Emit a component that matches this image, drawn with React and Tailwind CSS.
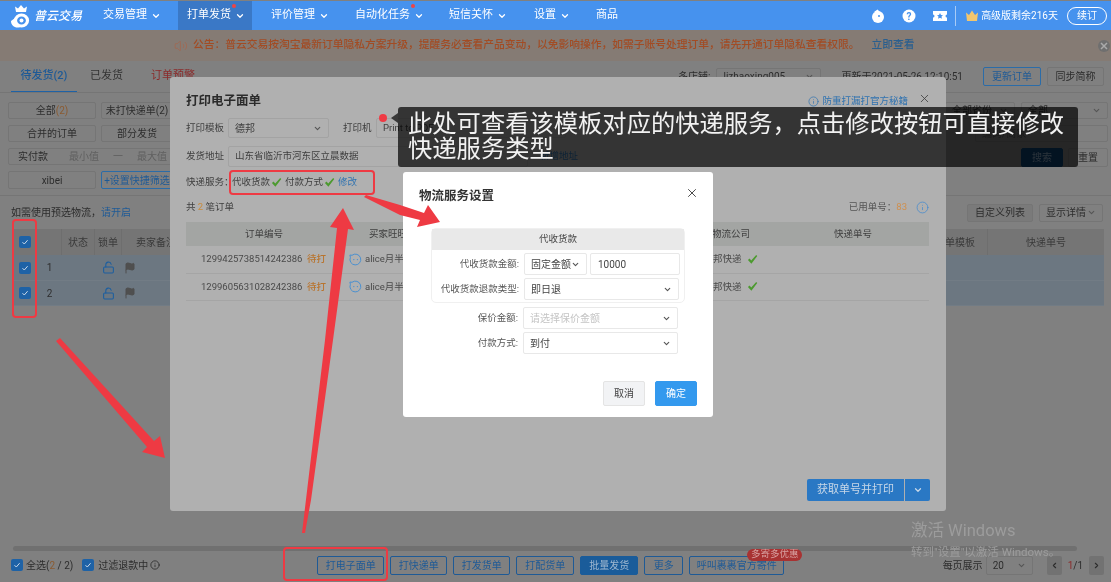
import React from "react";
import { ChevronDown, X, Info, Volume2, ChevronLeft, ChevronRight, Flag, LockOpen } from "lucide-react";

const Dot = () => <span className="absolute -right-[5px] -top-[3px] w-[4px] h-[4px] rounded-full bg-[#ef4444]" />;

function NavItem({ label, box, dot, active, chev = true }) {
  return (
    <div className={`flex items-center h-full ${box} ${active ? "bg-[#3a78c6]" : ""}`}>
      <span className="relative">{label}{dot && <Dot />}</span>
      {chev && <ChevronDown size={10} strokeWidth={3} className="ml-[4px]" />}
    </div>
  );
}

function Btn({ children, className = "" }) {
  return <div className={`flex items-center justify-center rounded-[2px] border text-[10px] ${className}`}>{children}</div>;
}

function Sel({ children, className = "", muted }) {
  return (
    <div className={`flex items-center justify-between rounded-[2px] border px-[6px] text-[10px] ${className}`}>
      <span className={muted ? "text-[#c4c4c4]" : ""}>{children}</span>
      <ChevronDown size={9} strokeWidth={3} className="shrink-0 text-[#555]" />
    </div>
  );
}

function Cb({ className = "" }) {
  return (
    <span className={`flex items-center justify-center w-[12px] h-[12px] rounded-[2px] bg-[#1e62a6] ${className}`}>
      <svg width="8" height="8" viewBox="0 0 8 8" fill="none"><path d="M1.5 4.2 3.3 6 6.6 2.2" stroke="#c9d9ea" strokeWidth="1" /></svg>
    </span>
  );
}

function Tick({ size = 11 }) {
  return (
    <svg width={size} height={size} viewBox="0 0 12 12" className="shrink-0">
      <path d="M1 6.5 2.8 5 4.6 7.2 10 1l1.2 1.1-6.4 8.6z" fill="#4c9a2f" />
    </svg>
  );
}

function Wang() {
  return (
    <svg width="13" height="13" viewBox="0 0 13 13" fill="none" className="shrink-0">
      <path d="M3 2.3A5.4 5.4 0 1 1 1.4 4.4L.9 2z" stroke="#4a90d0" strokeWidth="1" />
      <circle cx="4.8" cy="6.6" r=".7" fill="#4a90d0" /><circle cx="8.4" cy="6.6" r=".7" fill="#4a90d0" />
    </svg>
  );
}

function PageRow({ n, cls }) {
  return (
    <div className={`flex bg-[#6c7781] border-b border-[#727c85] text-[#2e2e2e] ${cls}`}>
      <div className="w-[25px] flex items-center justify-center"><Cb /></div>
      <div className="w-[25px] flex items-center justify-center text-[10px]">{n}</div>
      <div className="w-[33px]" />
      <div className="w-[27px] flex items-center justify-center"><LockOpen size={13} strokeWidth={2} className="text-[#1d5f9f]" /></div>
      <div className="w-[30px] flex items-center pl-[2px]"><Flag size={12} className="text-[#4f4f4f] fill-[#4f4f4f]" /></div>
    </div>
  );
}

function ModalRow({ no }) {
  return (
    <div className="relative flex items-center h-[27.5px] border-b border-[#a5a5a5] text-[#4a4a4a]">
      <span className="ml-[15px] w-[106px]">{no}</span>
      <span className="text-[#b8742e] font-medium">待打</span>
      <span className="ml-[23px]"><Wang /></span>
      <span className="ml-[3px]">alice月半</span>
      <span className="absolute left-[527px] flex items-center gap-[5px]">邦快递<Tick /></span>
    </div>
  );
}

function FormLabel({ children }) {
  return <span className="w-[87px] text-right text-[9.5px] text-[#555] mr-[5px] shrink-0">{children}</span>;
}

const bb = "border-[#757575]";

export default function App() {
  return (
    <div className="relative w-full h-[582px] overflow-hidden bg-[#808080] flex flex-col text-[#2c2c2c] blur-[0.35px] font-['Roboto','Noto_Sans_CJK_SC',sans-serif]">
      {/* nav */}
      <header className="mt-px h-[29px] shrink-0 bg-[#4692ee] text-white text-[11px] flex items-center">
        <div className="w-[94px] h-full flex items-center pl-[11px] gap-[3px]">
          <svg width="20" height="24" viewBox="0 0 20 24" fill="none" className="shrink-0">
            <path d="M5 8 4 2.500l3 2L10 1l3 3.500 3-2L15 8z" fill="#fff" />
            <ellipse cx="10.500" cy="16.500" rx="6" ry="5.500" stroke="#fff" strokeWidth="3.200" />
            <path d="M0 17c0 4 3 6.500 6.500 6.500 1.500 0 3-.8 3-.8C6 22 3.500 19 4 14z" fill="#fff" />
            <circle cx="10.500" cy="16.500" r="2" fill="#fff" />
          </svg>
          <span className="text-[12px] font-medium italic whitespace-nowrap">普云交易</span>
        </div>
        <NavItem label="交易管理" box="w-[84px] pl-[9px]" />
        <NavItem label="打单发货" box="w-[74px] pl-[9px]" active dot />
        <NavItem label="评价管理" box="w-[93px] pl-[19px]" />
        <NavItem label="自动化任务" box="w-[94px] pl-[10px]" dot />
        <NavItem label="短信关怀" box="w-[85px] pl-[10px]" />
        <NavItem label="设置" box="w-[62px] pl-[10px]" />
        <NavItem label="商品" box="pl-[10px]" chev={false} />
        <div className="ml-auto flex items-center h-full pr-[4px]">
          <svg width="14" height="14" viewBox="0 0 14 14"><circle cx="7" cy="8" r="6" fill="#fff" /><path d="M3 3 6.500.5 9 3z" fill="#fff" /><circle cx="8" cy="7" r="1" fill="#4692ee" /></svg>
          <svg width="14" height="14" viewBox="0 0 14 14" className="ml-[17px]"><circle cx="7" cy="7" r="6.500" fill="#fff" /><text x="7" y="10.500" textAnchor="middle" fontSize="10" fontWeight="700" fill="#4692ee">?</text></svg>
          <svg width="14" height="12" viewBox="0 0 14 12" className="ml-[17px]"><path d="M0 1h14v3.500a1.500 1.500 0 0 0 0 3V11H0V7.500a1.500 1.500 0 0 0 0-3z" fill="#fff" /><path d="m7 3 1 2 2 .2-1.500 1.400.4 2.100L7 7.700l-1.900 1 .4-2.100L4 5.200 6 5z" fill="#4692ee" /></svg>
          <span className="ml-[8px] w-px h-[20px] bg-[#a8cbf6]" />
          <svg width="12" height="11" viewBox="0 0 12 11" className="ml-[10px]"><path d="M0 2.500 3 5 6 .5 9 5l3-2.500-1 8.500H1z" fill="#f2c66d" /></svg>
          <span className="ml-[3px] text-[10px] whitespace-nowrap">高级版剩余216天</span>
          <div className="ml-[9px] w-[40px] h-[18px] rounded-full border border-white flex items-center justify-center text-[10px]">续订</div>
        </div>
      </header>

      {/* notice */}
      <div className="relative h-[31px] shrink-0 bg-[#857b74] flex items-center text-[10.75px] font-medium text-[#a24c24] pl-[174px]">
        <Volume2 size={14} strokeWidth={1.2} className="text-[#a8644a] mr-[5px]" />
        <span className="whitespace-nowrap">公告：普云交易按淘宝最新订单隐私方案升级，提醒务必查看产品变动，以免影响操作，如需子账号处理订单，请先开通订单隐私查看权限。</span>
        <span className="ml-[12px] text-[#2b5f8e] whitespace-nowrap">立即查看</span>
        <svg width="12" height="12" viewBox="0 0 12 12" className="absolute left-[1098px] top-[10px]"><circle cx="6" cy="6" r="6" fill="#6f6f6f" /><path d="M3 3l6 6M9 3l-6 6" stroke="#aaa" strokeWidth="1.500" /></svg>
      </div>

      {/* tabs */}
      <div className={`h-[32px] shrink-0 flex items-stretch border-b ${bb} pl-[11px] pr-[7px] text-[11px]`}>
        <div className="w-[66px] flex items-center justify-center border-b border-[#1e62a6] text-[#1e5a96] font-medium h-[31px]">待发货(2)</div>
        <div className="ml-[13px] flex items-center text-[#333]">已发货</div>
        <div className="ml-[28px] flex items-center text-[#8a2a2a]">订单预警</div>
        <div className="ml-auto flex items-center gap-[6px] text-[10px]">
          <span>多店铺:</span>
          <Sel className={`w-[105px] h-[18px] ${bb}`}>lizhaoxing005</Sel>
          <span className="ml-[14px] mr-[14px] whitespace-nowrap">更新于2021-05-26 12:10:51</span>
          <Btn className="w-[58px] h-[19px] border-[#2b6ca8] text-[#1e5a96]">更新订单</Btn>
          <Btn className={`w-[57px] h-[19px] ${bb}`}>同步简称</Btn>
        </div>
      </div>

      {/* filters */}
      <div className={`h-[103px] shrink-0 flex justify-between border-b ${bb} pl-[8px] pr-[3px] pt-[9px]`}>
        <div className="flex flex-col gap-[6px] w-[165px]">
          <div className="flex gap-[5px]">
            <Btn className={`w-[88px] h-[17px] ${bb}`}>全部<span className="text-[#8a5a30]">(2)</span></Btn>
            <Btn className={`w-[72px] h-[17px] ${bb} whitespace-nowrap`}>未打快递单(2)</Btn>
          </div>
          <div className="flex gap-[5px]">
            <Btn className={`w-[88px] h-[17px] ${bb}`}>合并的订单</Btn>
            <Btn className={`w-[72px] h-[17px] ${bb}`}>部分发货</Btn>
          </div>
          <div className={`flex items-center h-[17px] text-[10px] border ${bb} rounded-[2px] px-[9px] whitespace-nowrap`}>
            实付款<ChevronDown size={9} strokeWidth={3} className="ml-[3px]" />
            <span className="ml-[18px] text-[#5f5f5f]">最小值</span>
            <span className="ml-[14px] text-[#5f5f5f]">一</span>
            <span className="ml-[14px] text-[#5f5f5f]">最大值</span>
          </div>
          <div className="flex gap-[5px]">
            <Btn className={`w-[88px] h-[18px] ${bb}`}>xibei</Btn>
            <Btn className="w-[72px] h-[18px] border-[#2b6ca8] text-[#1e5a96] whitespace-nowrap">+设置快捷筛选</Btn>
          </div>
        </div>
        <div className="flex flex-col gap-[6px] w-[163px]">
          <div className="flex gap-[6px]">
            <Sel className={`w-[70px] h-[17px] ${bb}`}>全部省份</Sel>
            <Sel className={`w-[87px] h-[17px] ${bb}`}>全部</Sel>
          </div>
          <div className={`h-[17px] border ${bb} rounded-[2px] ml-[30px] flex items-center px-[6px] text-[10px] text-[#555]`}>编码/商家</div>
          <div className="flex justify-end gap-[5px]">
            <Btn className="w-[42px] h-[19px] bg-[#0d4170] border-[#0d4170] text-[#8ea9c2]">搜索</Btn>
            <Btn className={`w-[40px] h-[19px] ${bb}`}>重置</Btn>
          </div>
        </div>
      </div>

      {/* table bar */}
      <div className="h-[33px] shrink-0 flex items-center pl-[11px] pr-[8px] text-[10px]">
        <span>如需使用预选物流，<span className="text-[#1e5a96]">请开启</span></span>
        <Btn className={`ml-auto w-[66px] h-[18px] ${bb} bg-[#7a7a7a]`}>自定义列表</Btn>
        <Sel className={`ml-[6px] w-[64px] h-[18px] ${bb}`}>显示详情</Sel>
      </div>

      {/* table */}
      <div className="mx-[12px] w-[1092px] shrink-0 flex flex-col text-[10px]">
        <div className="flex h-[26px] bg-[#757575] text-[#3a3a3a]">
          <div className="w-[25px] flex items-center justify-center"><Cb /></div>
          <div className="w-[25px] border-r border-[#6e6e6e]" />
          <div className="w-[33px] flex items-center justify-center border-r border-[#6e6e6e]">状态</div>
          <div className="w-[27px] flex items-center justify-center border-r border-[#6e6e6e]">锁单</div>
          <div className="w-[60px] flex items-center pl-[14px] whitespace-nowrap">卖家备注</div>
          <div className="ml-auto w-[65px] flex items-center justify-center border-r border-[#6e6e6e] whitespace-nowrap">面单模板</div>
          <div className="w-[116px] flex items-center justify-center">快递单号</div>
        </div>
        <PageRow n="1" cls="h-[26px]" />
        <PageRow n="2" cls="h-[25px]" />
      </div>

      {/* bottom */}
      <div className="mt-auto shrink-0">
        <div className="ml-[13px] w-[1064px] h-[5px] rounded-full bg-[#707070]" />
        <div className="h-[31px] flex items-center text-[10px] pb-[3px] relative">
          <Cb className="ml-[11px]" />
          <span className="ml-[3px] whitespace-nowrap">全选(<span className="text-[#8a5a30]">2</span> / 2)</span>
          <Cb className="ml-[9px]" />
          <span className="ml-[4px] whitespace-nowrap">过滤退款中</span>
          <Info size={10} className="ml-[2px]" />
          <div className="ml-[157px] flex gap-[6px]">
            <Btn className="w-[67px] h-[19px] border-[#1e5a96] text-[#1e5a96]">打电子面单</Btn>
            <Btn className="w-[57px] h-[19px] border-[#1e5a96] text-[#1e5a96]">打快递单</Btn>
            <Btn className="w-[57px] h-[19px] border-[#1e5a96] text-[#1e5a96]">打发货单</Btn>
            <Btn className="w-[58px] h-[19px] border-[#1e5a96] text-[#1e5a96]">打配货单</Btn>
            <Btn className="w-[58px] h-[19px] bg-[#1a5c9a] border-[#1a5c9a] text-[#9fb8d0]">批量发货</Btn>
            <Btn className="w-[39px] h-[19px] border-[#1e5a96] text-[#1e5a96]">更多</Btn>
            <div className="relative">
              <Btn className="w-[95px] h-[19px] border-[#1e5a96] text-[#1e5a96]">呼叫裹裹官方寄件</Btn>
              <span className="absolute -top-[7px] left-[58px] w-[55px] h-[12px] rounded-full bg-[#a83232] text-[9.5px] text-[#d8a0a0] flex items-center justify-center whitespace-nowrap">多寄多优惠</span>
            </div>
          </div>
          <div className="ml-auto flex items-center pr-[7px]">
            <span className="whitespace-nowrap">每页展示</span>
            <Sel className={`ml-[3px] w-[47px] h-[19px] ${bb}`}>20</Sel>
            <span className="ml-[14px] w-[15px] h-[19px] rounded-[2px] bg-[#727272] flex items-center justify-center"><ChevronLeft size={9} strokeWidth={3} /></span>
            <span className="mx-[6px]"><span className="text-[#8a2a2a]">1</span>/1</span>
            <span className="w-[15px] h-[19px] rounded-[2px] bg-[#727272] flex items-center justify-center"><ChevronRight size={9} strokeWidth={3} /></span>
          </div>
        </div>
      </div>

      {/* modal: print */}
      <section className="absolute left-[170px] top-[77px] w-[776px] h-[434px] rounded-[3px] bg-[#b0b0b0] flex flex-col pl-[16px] pr-[17px] text-[9.5px] text-[#3e3e3e]">
        <div className="h-[41px] shrink-0 flex items-center pt-[7px]">
          <h2 className="text-[12.5px] font-bold text-[#2b2b2b]">打印电子面单</h2>
          <span className="ml-auto flex items-center gap-[3px] text-[#2f72b0]"><Info size={11} strokeWidth={1.5} />防重打漏打官方秘籍</span>
          <X size={13} strokeWidth={1.5} className="ml-[10px] mr-[-2px] mt-[-6px]" />
        </div>
        <div className="h-[20px] shrink-0 flex items-center">
          <span className="w-[42px]">打印模板</span>
          <Sel className="w-[101px] h-[20px] border-[#a3a3a3]">德邦</Sel>
          <span className="ml-[14px] w-[33px]">打印机</span>
          <div className="w-[190px] h-[20px] border border-[#a3a3a3] rounded-[2px] flex items-center px-[6px] whitespace-nowrap">Print to PDF</div>
        </div>
        <div className="mt-[8px] h-[21px] shrink-0 flex items-center">
          <span className="w-[42px]">发货地址</span>
          <div className="w-[300px] h-[21px] border border-[#a3a3a3] rounded-[2px] flex items-center px-[6px]">山东省临沂市河东区立晨数据</div>
          <span className="ml-[12px] text-[#2f72b0]">新增地址</span>
        </div>
        <div className="mt-[5px] h-[20px] shrink-0 flex items-center whitespace-nowrap">
          <span className="w-[46px]">快递服务：</span>
          <span>代收货款</span><span className="mx-[1px]"><Tick /></span>
          <span className="ml-[2px]">付款方式</span><span className="mx-[1px]"><Tick /></span>
          <span className="ml-[2px] text-[#2f72b0]">修改</span>
        </div>
        <div className="mt-[6px] h-[19px] shrink-0 flex items-center">
          <span>共 <span className="text-[#c98a3a]">2</span> 笔订单</span>
          <span className="ml-auto mr-[9px] text-[#555]">已用单号：<span className="text-[#cf8f4e]">83</span></span>
          <Info size={13} strokeWidth={1.3} className="text-[#3d88d0]" />
        </div>
        <div className="mt-[5px] shrink-0 flex flex-col">
          <div className="relative flex items-center h-[24px] bg-[#a3a5a3]">
            <span className="absolute left-[59px]">订单编号</span>
            <span className="absolute left-[183px]">买家旺旺</span>
            <span className="absolute left-[526px]">物流公司</span>
            <span className="absolute left-[648px]">快递单号</span>
          </div>
          <ModalRow no="1299425738514242386" />
          <ModalRow no="1299605631028242386" />
        </div>
        <div className="mt-auto mb-[10px] self-end flex h-[22px] mr-[-1px] text-[11px] text-[#c8d8e8]">
          <div className="w-[97px] bg-[#2a78c4] rounded-l-[2px] flex items-center justify-center">获取单号并打印</div>
          <div className="ml-px w-[25px] bg-[#2a78c4] rounded-r-[2px] flex items-center justify-center"><ChevronDown size={10} strokeWidth={3} /></div>
        </div>
      </section>

      {/* modal: logistics */}
      <section className="absolute left-[403px] top-[172px] w-[310px] h-[245px] rounded-[3px] bg-white flex flex-col text-[10px] text-[#444]">
        <div className="h-[56px] shrink-0 flex justify-between pl-[16px] pr-[14px] pt-[15px]">
          <h3 className="text-[12.5px] font-bold text-[#333] leading-[18px]">物流服务设置</h3>
          <X size={14} strokeWidth={1.5} className="text-[#333] mt-[-1px]" />
        </div>
        <div className="ml-[28px] w-[254px] h-[75px] rounded-[5px] border border-[#f0f0f0] flex flex-col shrink-0">
          <div className="h-[21px] bg-[#e9e9e9] flex items-center justify-center text-[9.5px]">代收货款</div>
          <div className="mt-[3px] flex items-center h-[22px]">
            <FormLabel>代收货款金额:</FormLabel>
            <Sel className="w-[63px] h-[22px] border-[#e8e8e8]">固定金额</Sel>
            <div className="ml-[3px] w-[90px] h-[22px] border border-[#e8e8e8] rounded-[2px] flex items-center px-[7px]">10000</div>
          </div>
          <div className="mt-[3px] flex items-center h-[22px]">
            <FormLabel>代收货款退款类型:</FormLabel>
            <Sel className="w-[155px] h-[22px] border-[#e8e8e8]">即日退</Sel>
          </div>
        </div>
        <div className="ml-[28px] mt-[4px] flex items-center h-[22px] shrink-0">
          <FormLabel>保价金额:</FormLabel>
          <Sel className="w-[155px] h-[22px] border-[#e8e8e8]" muted>请选择保价金额</Sel>
        </div>
        <div className="ml-[28px] mt-[3px] flex items-center h-[22px] shrink-0">
          <FormLabel>付款方式:</FormLabel>
          <Sel className="w-[155px] h-[22px] border-[#e8e8e8]">到付</Sel>
        </div>
        <div className="mt-auto mb-[11px] flex justify-end gap-[10px] pr-[16px]">
          <Btn className="w-[42px] h-[25px] bg-[#f2f3f5] border-[#e4e4e4]">取消</Btn>
          <Btn className="w-[42px] h-[25px] bg-[#3399ee] border-[#3399ee] text-white">确定</Btn>
        </div>
      </section>

      {/* Windows watermark */}
      <div className="absolute left-[911px] top-[520px] text-[#9c9c9c] whitespace-nowrap">
        <div className="text-[16.5px] leading-[22px]">激活 Windows</div>
        <div className="text-[11.5px] leading-[16px] mt-[2px]">转到"设置"以激活 Windows。</div>
      </div>

      {/* tooltip */}
      <div className="absolute left-[398px] top-[107px] w-[680px] h-[60px] rounded-[3px] bg-black/70 pl-[10px] pt-[4px] text-[24.3px] leading-[25px] text-[#f2f2f2]">
        此处可查看该模板对应的快递服务，点击修改按钮可直接修改<br />快递服务类型
      </div>
      <span className="absolute left-[391px] top-[113px] w-0 h-0 border-y-[5px] border-y-transparent border-r-[7px] border-r-[#393939]" />
      <span className="absolute left-[379px] top-[114px] w-[8px] h-[8px] rounded-full bg-[#ef3b45]" />

      {/* red boxes */}
      <div className="absolute left-[229px] top-[170px] w-[146px] h-[25px] rounded-[4px] border-2 border-[#ee3a43]" />
      <div className="absolute left-[12px] top-[219px] w-[25px] h-[99px] rounded-[4px] border-2 border-[#ee3a43]" />
      <div className="absolute left-[283px] top-[547px] w-[105px] h-[34px] rounded-[4px] border-2 border-[#ee3a43]" />

      {/* arrows */}
      <svg className="absolute inset-0 pointer-events-none" width="1111" height="582" viewBox="0 0 1111 582" fill="#ee3a43">
        <path d="M56 341 60 338 154 441 160 436 165 458 142 452 147 447z" />
        <path d="M302 533 305 533 311 500 333 340 348 229 354 230 343 208 330 227 337 228 325 340z" />
        <path d="M364 197 366 195 400 205 424 213 428 205 440 222 417 227 420 220 400 215z" />
      </svg>
    </div>
  );
}
